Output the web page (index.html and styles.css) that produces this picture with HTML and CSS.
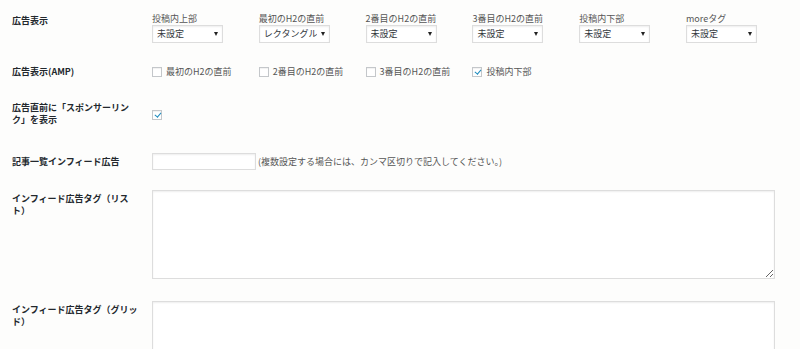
FILE: index.html
```html
<!DOCTYPE html>
<html lang="ja">
<head>
<meta charset="utf-8">
<title>広告設定</title>
<link rel="stylesheet" href="styles.css">
</head>
<body>
<div class="form">
  <div class="row r1">
    <div class="th">広告表示</div>
    <div class="td cols">
      <div class="col"><div class="cap">投稿内上部</div><div class="selwrap"><select class="sel"><option>未設定</option></select></div></div>
      <div class="col"><div class="cap">最初のH2の直前</div><div class="selwrap"><select class="sel"><option>レクタングル</option></select></div></div>
      <div class="col"><div class="cap">2番目のH2の直前</div><div class="selwrap"><select class="sel"><option>未設定</option></select></div></div>
      <div class="col"><div class="cap">3番目のH2の直前</div><div class="selwrap"><select class="sel"><option>未設定</option></select></div></div>
      <div class="col"><div class="cap">投稿内下部</div><div class="selwrap"><select class="sel"><option>未設定</option></select></div></div>
      <div class="col"><div class="cap">moreタグ</div><div class="selwrap"><select class="sel"><option>未設定</option></select></div></div>
    </div>
  </div>

  <div class="row r2">
    <div class="th">広告表示(AMP)</div>
    <div class="td cols">
      <label class="check"><input type="checkbox">最初のH2の直前</label>
      <label class="check"><input type="checkbox">2番目のH2の直前</label>
      <label class="check"><input type="checkbox">3番目のH2の直前</label>
      <label class="check"><input type="checkbox" checked>投稿内下部</label>
    </div>
  </div>

  <div class="row r3">
    <div class="th">広告直前に「スポンサーリンク」を表示</div>
    <div class="td"><label class="check"><input type="checkbox" checked></label></div>
  </div>

  <div class="row r4">
    <div class="th">記事一覧インフィード広告</div>
    <div class="td inline"><input type="text" class="text"><span class="hint">(複数設定する場合には、カンマ区切りで記入してください。)</span></div>
  </div>

  <div class="row r5">
    <div class="th">インフィード広告タグ（リスト）</div>
    <div class="td"><textarea class="area"></textarea></div>
  </div>

  <div class="row r6">
    <div class="th">インフィード広告タグ（グリッド）</div>
    <div class="td"><textarea class="area"></textarea></div>
  </div>
</div>
</body>
</html>
```

FILE: styles.css
```css
html, body {
  margin: 0;
  background: #fdfdfc;
}
body {
  font-family: "Noto Sans CJK JP", sans-serif;
  font-size: 9px;
  line-height: 12px;
  color: #32373c;
}
.form {
  padding-left: 12px;
}
.row {
  display: grid;
  grid-template-columns: 140px 1fr;
  align-items: start;
}
.th {
  width: 130px;
  font-weight: bold;
  color: #23282d;
}
.cols {
  display: grid;
  grid-template-columns: repeat(6, 106.8px);
}
.cap {
  color: #555;
  height: 12px;
  white-space: nowrap;
}
.selwrap {
  position: relative;
  width: 71px;
}
.selwrap::after {
  content: "";
  position: absolute;
  right: 5px;
  top: 7px;
  border-left: 2px solid transparent;
  border-right: 2px solid transparent;
  border-top: 4px solid #222;
  pointer-events: none;
}
.sel {
  appearance: none;
  -webkit-appearance: none;
  display: block;
  box-sizing: border-box;
  width: 71px;
  height: 18px;
  margin: 0;
  padding: 0 12px 0 4px;
  border: 1px solid #ddd;
  border-radius: 0;
  background: #fff;
  box-shadow: inset 0 1px 2px rgba(0, 0, 0, 0.07);
  font: inherit;
  line-height: 16px;
  color: #32373c;
}
.check {
  display: flex;
  align-items: center;
  color: #555;
  white-space: nowrap;
  height: 12px;
}
.check input {
  appearance: none;
  -webkit-appearance: none;
  position: relative;
  box-sizing: border-box;
  width: 10px;
  height: 10px;
  margin: 0 4px 0 0;
  border: 1px solid #c4c7ca;
  border-radius: 0;
  background: #fff;
  box-shadow: inset 0 1px 1px rgba(0, 0, 0, 0.06);
}
.check input:checked::before {
  content: "";
  position: absolute;
  left: 2.5px;
  top: 0px;
  width: 2.5px;
  height: 5px;
  border-right: 1.5px solid #1e8cbe;
  border-bottom: 1.5px solid #1e8cbe;
  transform: rotate(40deg);
}
.r1 {
  padding-top: 13px;
}
.r1 .th {
  padding-top: 2px;
}
.r2 {
  margin-top: 23px;
}
.r3 {
  margin-top: 24px;
}
.r3 .td {
  padding-top: 7px;
}
.r4 {
  margin-top: 27px;
  align-items: center;
}
.inline {
  display: flex;
  align-items: center;
}
.text {
  box-sizing: border-box;
  width: 104px;
  height: 17px;
  margin: 0;
  padding: 0 4px;
  border: 1px solid #ddd;
  border-radius: 0;
  background: #fff;
  box-shadow: inset 0 1px 2px rgba(0, 0, 0, 0.07);
  font: inherit;
}
.hint {
  margin-left: 2px;
  color: #555;
}
.r5 {
  margin-top: 20px;
}
.r5 .th,
.r6 .th {
  padding-top: 3px;
}
.r6 {
  margin-top: 22px;
}
.area {
  display: block;
  box-sizing: border-box;
  width: 623px;
  height: 89px;
  margin: 0;
  padding: 2px 4px;
  border: 1px solid #ddd;
  border-radius: 0;
  background: #fff;
  box-shadow: inset 0 1px 2px rgba(0, 0, 0, 0.07);
  font: inherit;
}
```
